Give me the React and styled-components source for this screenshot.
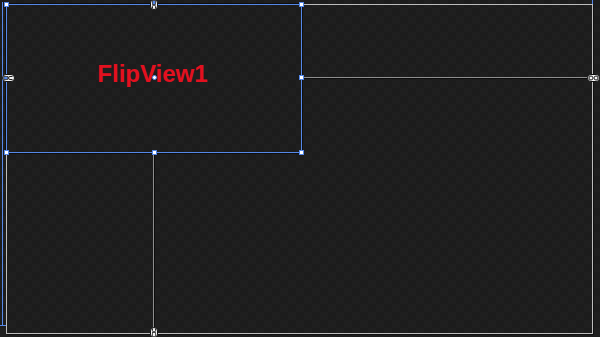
import React from 'react'
import styled, { createGlobalStyle } from 'styled-components'

const BLUE = '#5588e8'

const Global = createGlobalStyle`
  html, body {
    margin: 0;
    padding: 0;
    width: 600px;
    height: 337px;
    overflow: hidden;
    background: #1e1e1e;
  }
`

const Surface = styled.div`
  position: relative;
  width: 600px;
  height: 337px;
  box-sizing: border-box;
  padding: 4px 0 0 6px;
  background: repeating-conic-gradient(#1f1f1f 0 25%, #1c1c1c 0 50%) 0 0 / 16px 16px;
`

// margin guides drawn by the designer at the page edge
const Guide = styled.div`
  position: absolute;
  background: ${BLUE};
  left: ${p => p.$x}px;
  top: ${p => p.$y}px;
  width: ${p => p.$w}px;
  height: ${p => p.$h}px;
`

const Frame = styled.div`
  position: relative;
  width: 587px;
  height: 330px;
  box-sizing: border-box;
  border: 1px solid #bdbdbd;
  box-shadow: 1px 1px 0 #111;
  display: grid;
  grid-template-columns: 147px 148px 1fr;
  grid-template-rows: 73px 75px 1fr;
`

const FlipView = styled.div`
  grid-column: 1 / 3;
  grid-row: 1 / 3;
  display: flex;
  align-items: center;
  justify-content: center;
  padding: 0 4px 11px 0;
  box-sizing: border-box;
`

const Title = styled.span`
  font-family: "Liberation Sans", Arial, sans-serif;
  font-weight: 700;
  font-size: 24px;
  line-height: 1;
  color: #e3101f;
`

const Cell = styled.div`
  box-sizing: border-box;
  display: flex;
  align-items: flex-end;
  justify-content: flex-end;
  grid-column: ${p => p.$col};
  grid-row: ${p => p.$row};
  ${p => p.$bottom && 'border-bottom: 1px solid #8e8e8e; box-shadow: 0 1px 0 #0c0c0c;'}
  ${p => p.$right && 'border-right: 1px solid #8e8e8e; box-shadow: 1px 0 0 #0c0c0c;'}
`

const Selection = styled.div`
  position: absolute;
  left: -3px;
  top: -3px;
  width: 300px;
  height: 153px;
  display: grid;
  grid-template-columns: 5px 1fr 5px;
  grid-template-rows: 5px 1fr 5px;
  pointer-events: none;

  &::before {
    content: '';
    position: absolute;
    inset: 2px;
    border: 1px solid ${BLUE};
    box-shadow: 0 0 0 1px rgba(0, 0, 0, 0.5);
  }
`

const Handle = styled.div`
  position: relative;
  grid-column: ${p => p.$col};
  grid-row: ${p => p.$row};
  justify-self: center;
  align-self: center;
  width: 5px;
  height: 5px;
  margin-bottom: ${p => (p.$row === 2 ? '2px' : '0')};
  box-sizing: border-box;
  background: #fff;
  border: 1px solid ${BLUE};
  border-radius: ${p => (p.$round ? '50%' : '0')};
`

const Pin = styled.div`
  position: relative;
  line-height: 0;
  grid-column: ${p => p.$col || 'auto'};
  grid-row: ${p => p.$row || 'auto'};
  justify-self: ${p => p.$justify || 'center'};
  align-self: ${p => p.$align || 'center'};
  margin: ${p => p.$margin || '0'};
`

function VPin({ flip, ...rest }) {
  return (
    <Pin {...rest}>
      <svg width="8" height="11" viewBox="0 0 8 11" style={flip ? { transform: 'scaleY(-1)' } : undefined}>
        <rect x="0.5" y="0.5" width="7" height="10" rx="3.5" fill="#f2f2f2" stroke="#111" />
        <rect x="2.5" y="1.5" width="3" height="4" fill={flip ? '#f2f2f2' : BLUE} stroke="#333" strokeWidth="0.8" />
        <path d="M2.5 9.5 V7.5 a1.5 1.5 0 0 1 3 0 V9.5" fill="none" stroke="#222" strokeWidth="1" />
      </svg>
    </Pin>
  )
}

function HPin({ plain, ...rest }) {
  return (
    <Pin {...rest}>
      <svg width="13" height="8" viewBox="0 0 13 8">
        <rect x="0.5" y="0.5" width="12" height="7" rx="3.5" fill="#f2f2f2" stroke="#111" />
        {plain ? (
          <>
            <circle cx="4" cy="4" r="2" fill="none" stroke="#222" strokeWidth="1" />
            <circle cx="9" cy="4" r="2" fill="none" stroke="#222" strokeWidth="1" />
          </>
        ) : (
          <>
            <rect x="1.8" y="2.5" width="4" height="3" fill={BLUE} stroke="#333" strokeWidth="0.8" />
            <path d="M10.5 2.5 H8 a1.5 1.5 0 0 0 0 3 H10.5" fill="none" stroke="#222" strokeWidth="1" />
          </>
        )}
      </svg>
    </Pin>
  )
}

export default function App() {
  return (
    <>
      <Global />
      <Surface>
        <Guide $x={2} $y={2} $w={1} $h={323} />
        <Guide $x={0} $y={325} $w={7} $h={1} />
        <Guide $x={592} $y={0} $w={1} $h={4} />
        <Frame>
          <FlipView>
            <Title>FlipView1</Title>
          </FlipView>
          <Cell $col="3" $row="1" $bottom>
            <HPin plain $align="flex-end" $margin="0 -8px -5px 0" />
          </Cell>
          <Cell $col="1" $row="3" $right>
            <VPin flip $align="flex-end" $margin="0 -5px -5px 0" />
          </Cell>
          <Selection>
            <Handle $col={1} $row={1} />
            <VPin $col={2} $row={1} />
            <Handle $col={3} $row={1} />
            <HPin $col={1} $row={2} $justify="start" $margin="0 0 2px -2px" />
            <Handle $col={2} $row={2} $round />
            <Handle $col={3} $row={2} />
            <Handle $col={1} $row={3} />
            <Handle $col={2} $row={3} />
            <Handle $col={3} $row={3} />
          </Selection>
        </Frame>
      </Surface>
    </>
  )
}
